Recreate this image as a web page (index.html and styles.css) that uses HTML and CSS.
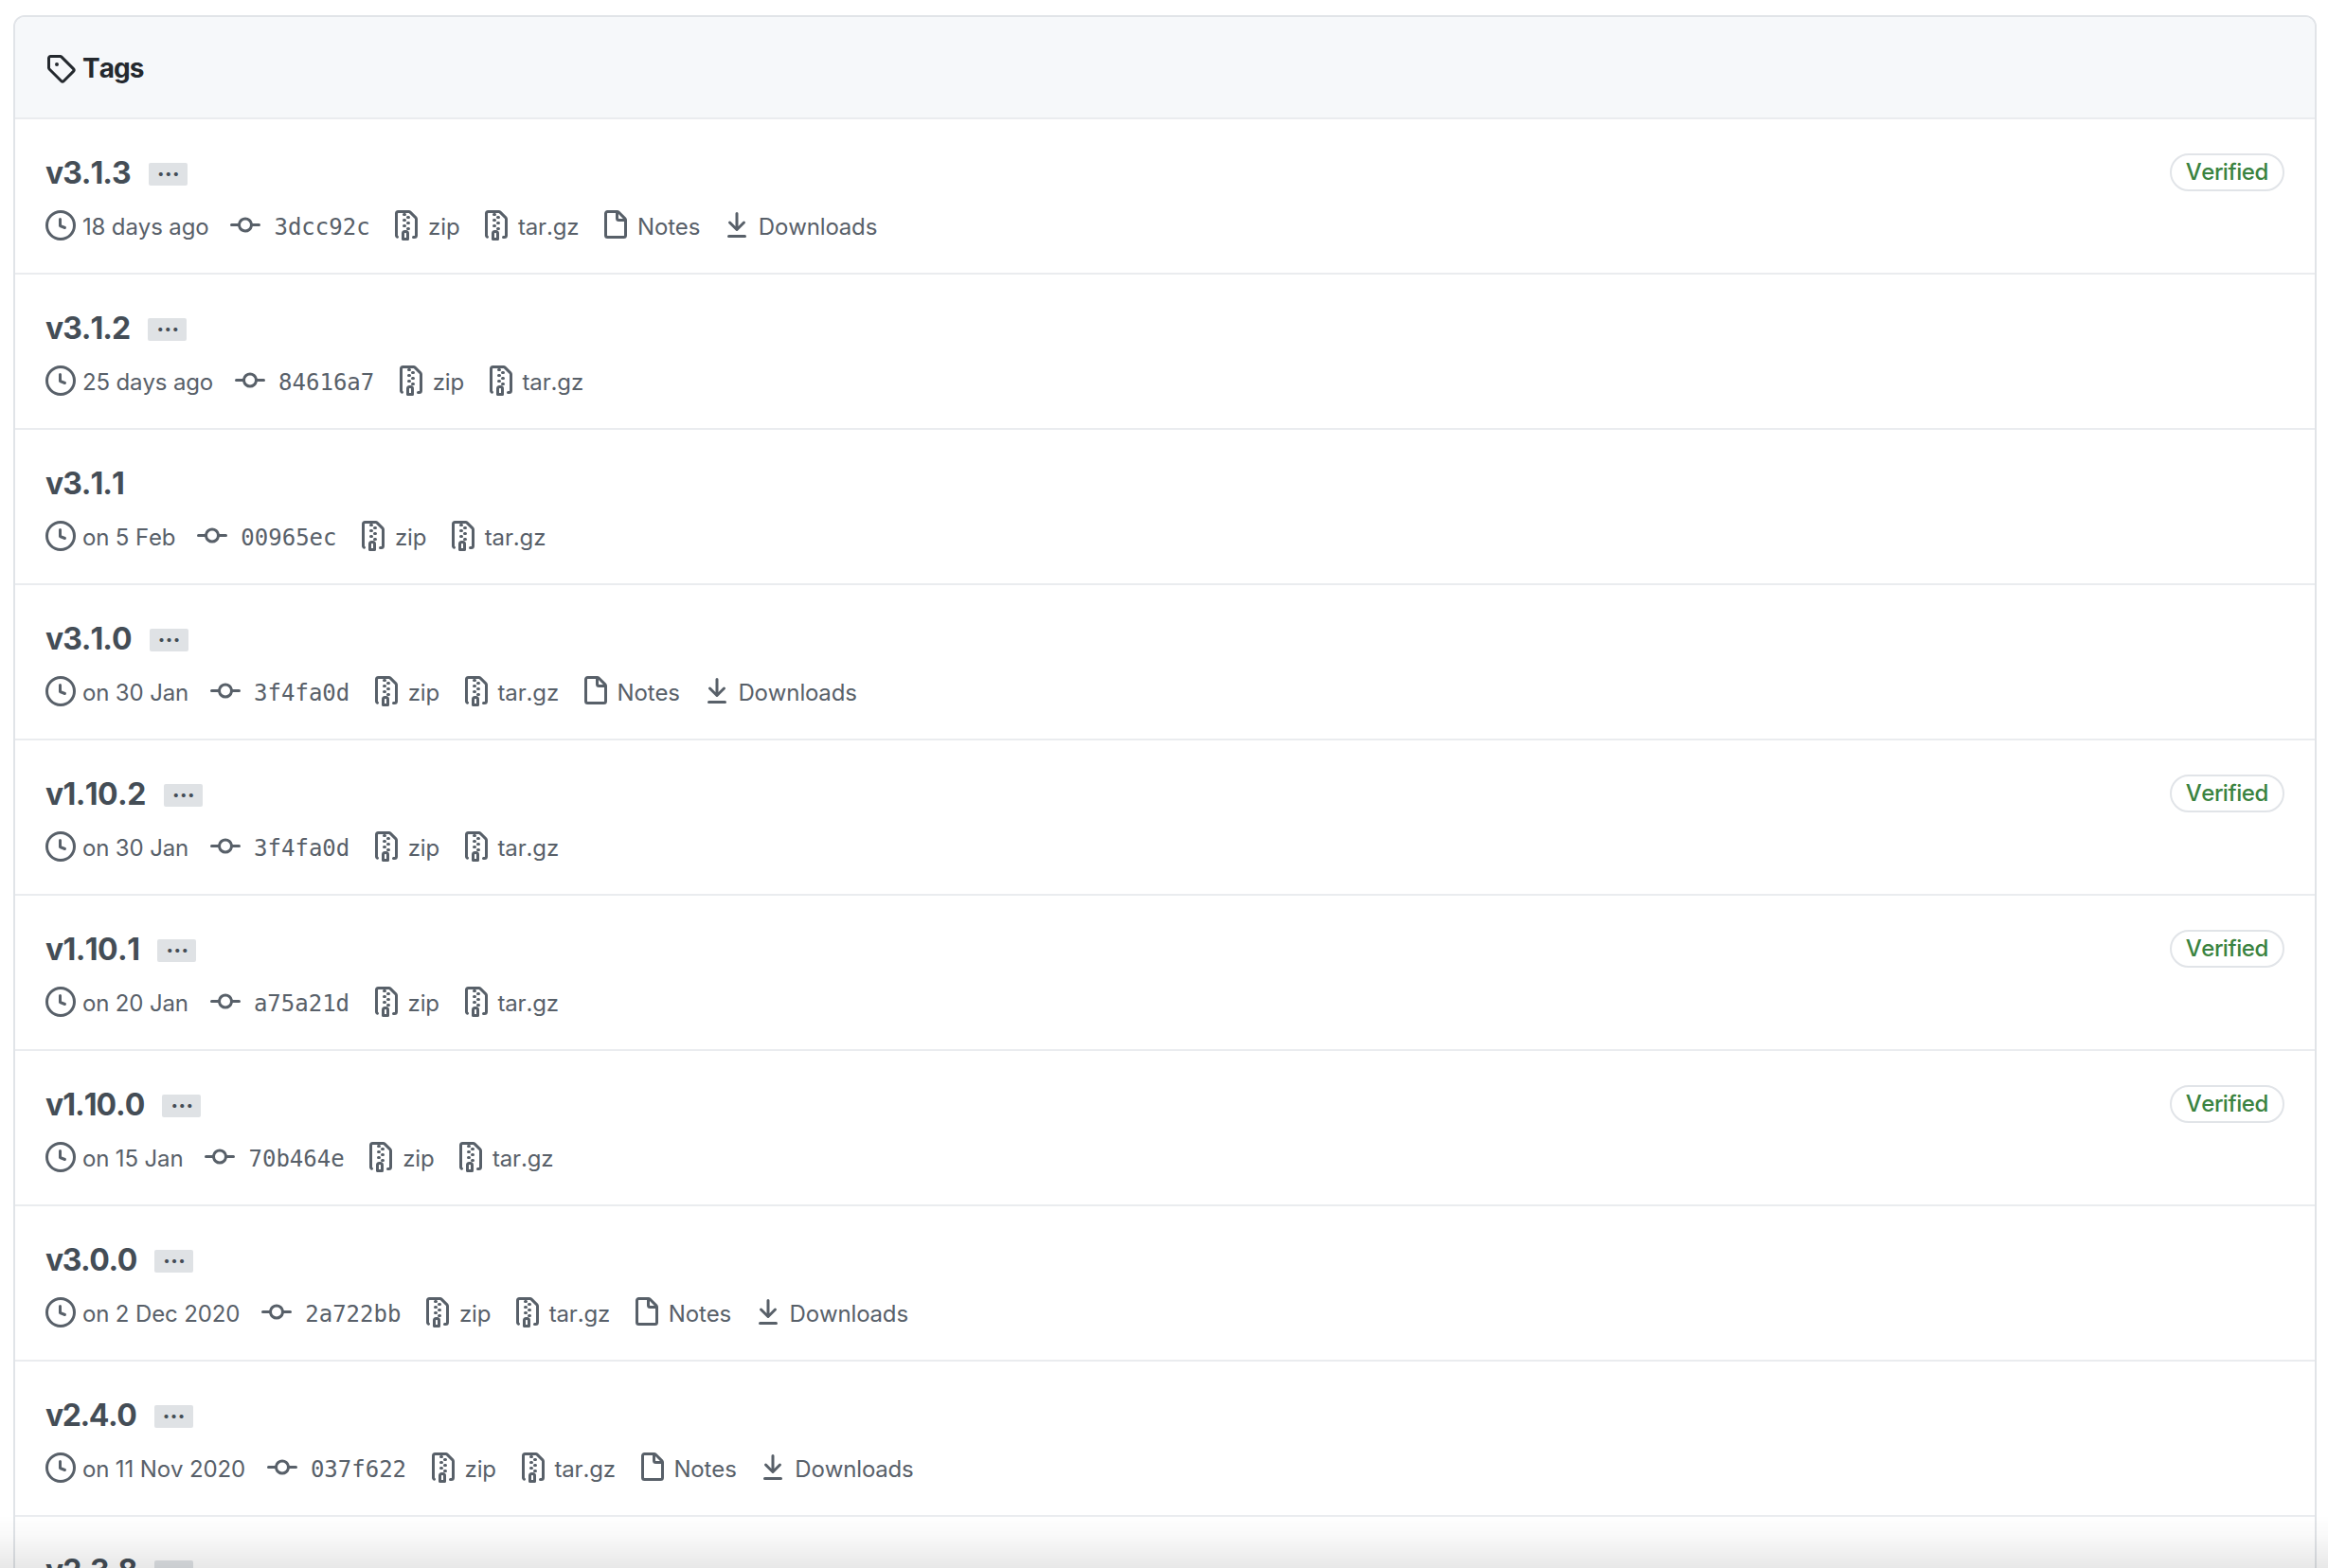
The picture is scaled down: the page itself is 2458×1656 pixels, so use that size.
FILE: index.html
```html
<!DOCTYPE html>
<html lang="en">

<head>
  <meta charset="UTF-8">
  <meta name="viewport" content="width=device-width, initial-scale=1.0">
  <title>Tags</title>
  <link rel="stylesheet" href="styles.css">
</head>

<body>
  <svg class="sprite" aria-hidden="true">
    <symbol id="tag" viewBox="0 0 16 16"><path fill-rule="evenodd" d="M2.5 7.775V2.75a.25.25 0 01.25-.25h5.025a.25.25 0 01.177.073l6.25 6.25a.25.25 0 010 .354l-5.025 5.025a.25.25 0 01-.354 0l-6.25-6.25a.25.25 0 01-.073-.177zm-1.5 0V2.75C1 1.784 1.784 1 2.75 1h5.025c.464 0 .91.184 1.238.513l6.25 6.25a1.75 1.75 0 010 2.474l-5.026 5.026a1.75 1.75 0 01-2.474 0l-6.25-6.25A1.75 1.75 0 011 7.775zM6 5a1 1 0 100 2 1 1 0 000-2z"/></symbol>
    <symbol id="clock" viewBox="0 0 16 16"><path fill-rule="evenodd" d="M1.5 8a6.5 6.5 0 1113 0 6.5 6.5 0 01-13 0zM8 0a8 8 0 100 16A8 8 0 008 0zm.5 4.75a.75.75 0 00-1.5 0v3.5a.75.75 0 00.471.696l2.5 1a.75.75 0 00.557-1.392L8.5 7.742V4.75z"/></symbol>
    <symbol id="commit" viewBox="0 0 16 16"><path fill-rule="evenodd" d="M10.5 7.75a2.5 2.5 0 11-5 0 2.5 2.5 0 015 0zm1.43.75a4.002 4.002 0 01-7.86 0H.75a.75.75 0 110-1.5h3.32a4.001 4.001 0 017.86 0h3.32a.75.75 0 110 1.5h-3.32z"/></symbol>
    <symbol id="file-zip" viewBox="0 0 16 16"><path fill-rule="evenodd" d="M3.5 1.75a.25.25 0 01.25-.25h3a.75.75 0 000 1.5h.5a.75.75 0 000-1.5h2.086a.25.25 0 01.177.073l2.914 2.914a.25.25 0 01.073.177v8.586a.25.25 0 01-.25.25h-.5a.75.75 0 000 1.5h.5A1.75 1.75 0 0014 13.25V4.664c0-.464-.184-.909-.513-1.237L10.573.513A1.75 1.75 0 009.336 0H3.75A1.75 1.75 0 002 1.75v11.5c0 .649.353 1.214.874 1.515a.75.75 0 10.752-1.298.25.25 0 01-.126-.217V1.75zM8.75 3a.75.75 0 000 1.5h.5a.75.75 0 000-1.5h-.5zM6 5.25a.75.75 0 01.75-.75h.5a.75.75 0 010 1.5h-.5A.75.75 0 016 5.25zm2 1.5A.75.75 0 018.75 6h.5a.75.75 0 010 1.5h-.5A.75.75 0 018 6.75zm-1.25.75a.75.75 0 000 1.5h.5a.75.75 0 000-1.5h-.5zM8 9.75A.75.75 0 018.75 9h.5a.75.75 0 010 1.5h-.5A.75.75 0 018 9.75zm-.75.75a1.75 1.75 0 00-1.75 1.75v3c0 .414.336.75.75.75h2.5a.75.75 0 00.75-.75v-3a1.75 1.75 0 00-1.75-1.75h-.5zM7 12.25a.25.25 0 01.25-.25h.5a.25.25 0 01.25.25v2.25H7v-2.25z"/></symbol>
    <symbol id="file" viewBox="0 0 16 16"><path fill-rule="evenodd" d="M3.75 1.5a.25.25 0 00-.25.25v11.5c0 .138.112.25.25.25h8.5a.25.25 0 00.25-.25V6H9.75A1.75 1.75 0 018 4.25V1.5H3.75zm5.75.56v2.19c0 .138.112.25.25.25h2.19L9.5 2.06zM2 1.75C2 .784 2.784 0 3.75 0h5.086c.464 0 .909.184 1.237.513l3.414 3.414c.329.328.513.773.513 1.237v8.086A1.75 1.75 0 0112.25 15h-8.5A1.75 1.75 0 012 13.25V1.75z"/></symbol>
    <symbol id="download" viewBox="0 0 16 16"><path fill-rule="evenodd" d="M7.47 10.78a.75.75 0 001.06 0l3.75-3.75a.75.75 0 00-1.06-1.06L8.75 8.44V1.75a.75.75 0 00-1.5 0v6.69L4.78 5.97a.75.75 0 00-1.06 1.06l3.75 3.75zM3.75 13a.75.75 0 000 1.5h8.5a.75.75 0 000-1.5h-8.5z"/></symbol>
  </svg>

  <div class="box">
    <div class="box-header">
      <svg class="icon"><use href="#tag"/></svg>
      <h3>Tags</h3>
    </div>

    <div class="row">
      <div class="title">
        <h4>v3.1.3</h4>
        <button class="expander">…</button>
        <span class="verified">Verified</span>
      </div>
      <ul class="meta">
        <li><svg class="icon"><use href="#clock"/></svg>18 days ago</li>
        <li class="sha"><svg class="icon"><use href="#commit"/></svg>3dcc92c</li>
        <li><svg class="icon"><use href="#file-zip"/></svg>zip</li>
        <li><svg class="icon"><use href="#file-zip"/></svg>tar.gz</li>
        <li><svg class="icon"><use href="#file"/></svg>Notes</li>
        <li><svg class="icon"><use href="#download"/></svg>Downloads</li>
      </ul>
    </div>

    <div class="row">
      <div class="title">
        <h4>v3.1.2</h4>
        <button class="expander">…</button>
      </div>
      <ul class="meta">
        <li><svg class="icon"><use href="#clock"/></svg>25 days ago</li>
        <li class="sha"><svg class="icon"><use href="#commit"/></svg>84616a7</li>
        <li><svg class="icon"><use href="#file-zip"/></svg>zip</li>
        <li><svg class="icon"><use href="#file-zip"/></svg>tar.gz</li>
      </ul>
    </div>

    <div class="row">
      <div class="title">
        <h4>v3.1.1</h4>
      </div>
      <ul class="meta">
        <li><svg class="icon"><use href="#clock"/></svg>on 5 Feb</li>
        <li class="sha"><svg class="icon"><use href="#commit"/></svg>00965ec</li>
        <li><svg class="icon"><use href="#file-zip"/></svg>zip</li>
        <li><svg class="icon"><use href="#file-zip"/></svg>tar.gz</li>
      </ul>
    </div>

    <div class="row">
      <div class="title">
        <h4>v3.1.0</h4>
        <button class="expander">…</button>
      </div>
      <ul class="meta">
        <li><svg class="icon"><use href="#clock"/></svg>on 30 Jan</li>
        <li class="sha"><svg class="icon"><use href="#commit"/></svg>3f4fa0d</li>
        <li><svg class="icon"><use href="#file-zip"/></svg>zip</li>
        <li><svg class="icon"><use href="#file-zip"/></svg>tar.gz</li>
        <li><svg class="icon"><use href="#file"/></svg>Notes</li>
        <li><svg class="icon"><use href="#download"/></svg>Downloads</li>
      </ul>
    </div>

    <div class="row">
      <div class="title">
        <h4 class="minor">v1.10.2</h4>
        <button class="expander">…</button>
        <span class="verified">Verified</span>
      </div>
      <ul class="meta">
        <li><svg class="icon"><use href="#clock"/></svg>on 30 Jan</li>
        <li class="sha"><svg class="icon"><use href="#commit"/></svg>3f4fa0d</li>
        <li><svg class="icon"><use href="#file-zip"/></svg>zip</li>
        <li><svg class="icon"><use href="#file-zip"/></svg>tar.gz</li>
      </ul>
    </div>

    <div class="row">
      <div class="title">
        <h4 class="minor">v1.10.1</h4>
        <button class="expander">…</button>
        <span class="verified">Verified</span>
      </div>
      <ul class="meta">
        <li><svg class="icon"><use href="#clock"/></svg>on 20 Jan</li>
        <li class="sha"><svg class="icon"><use href="#commit"/></svg>a75a21d</li>
        <li><svg class="icon"><use href="#file-zip"/></svg>zip</li>
        <li><svg class="icon"><use href="#file-zip"/></svg>tar.gz</li>
      </ul>
    </div>

    <div class="row">
      <div class="title">
        <h4>v1.10.0</h4>
        <button class="expander">…</button>
        <span class="verified">Verified</span>
      </div>
      <ul class="meta">
        <li><svg class="icon"><use href="#clock"/></svg>on 15 Jan</li>
        <li class="sha"><svg class="icon"><use href="#commit"/></svg>70b464e</li>
        <li><svg class="icon"><use href="#file-zip"/></svg>zip</li>
        <li><svg class="icon"><use href="#file-zip"/></svg>tar.gz</li>
      </ul>
    </div>

    <div class="row">
      <div class="title">
        <h4 class="major">v3.0.0</h4>
        <button class="expander">…</button>
      </div>
      <ul class="meta">
        <li><svg class="icon"><use href="#clock"/></svg>on 2 Dec 2020</li>
        <li class="sha"><svg class="icon"><use href="#commit"/></svg>2a722bb</li>
        <li><svg class="icon"><use href="#file-zip"/></svg>zip</li>
        <li><svg class="icon"><use href="#file-zip"/></svg>tar.gz</li>
        <li><svg class="icon"><use href="#file"/></svg>Notes</li>
        <li><svg class="icon"><use href="#download"/></svg>Downloads</li>
      </ul>
    </div>

    <div class="row">
      <div class="title">
        <h4 class="major">v2.4.0</h4>
        <button class="expander">…</button>
      </div>
      <ul class="meta">
        <li><svg class="icon"><use href="#clock"/></svg>on 11 Nov 2020</li>
        <li class="sha"><svg class="icon"><use href="#commit"/></svg>037f622</li>
        <li><svg class="icon"><use href="#file-zip"/></svg>zip</li>
        <li><svg class="icon"><use href="#file-zip"/></svg>tar.gz</li>
        <li><svg class="icon"><use href="#file"/></svg>Notes</li>
        <li><svg class="icon"><use href="#download"/></svg>Downloads</li>
      </ul>
    </div>

    <div class="row">
      <div class="title">
        <h4>v2.3.8</h4>
        <button class="expander">…</button>
      </div>
    </div>
  </div>

  <div class="fade"></div>
</body>

</html>
```

FILE: styles.css
```css
* {
  box-sizing: border-box;
}

body {
  font-family: Inter, "Liberation Sans", sans-serif;
  font-size: 28px;
  font-kerning: none;
  line-height: 1.5;
  color: #24292e;
  background-color: #fff;
  height: 100vh;
  margin: 0;
  padding: 16px 12px 0 14px;
  overflow: hidden;
}

.sprite {
  display: none;
}

.icon {
  width: 32px;
  height: 32px;
  fill: currentColor;
  flex-shrink: 0;
}

.box {
  border: 2px solid #e1e4e8;
  border-radius: 12px;
  overflow: hidden;
}

.box-header {
  display: flex;
  align-items: center;
  gap: 7px;
  height: 106px;
  padding: 2px 32px 0;
  background-color: #f6f8fa;
}

h3,
h4 {
  margin: 0;
  font-weight: 650;
}

h3 {
  font-size: 28px;
  letter-spacing: -1px;
}

.row {
  height: 164px;
  padding: 32px 32px 0;
  border-top: 2px solid #eaecef;
}

.title {
  display: flex;
  height: 48px;
}

h4 {
  font-size: 32px;
  line-height: 50px;
  letter-spacing: -1px;
  color: #444d56;
}

h4.minor {
  letter-spacing: -0.6px;
}

h4.major {
  letter-spacing: -1.4px;
}

.expander {
  width: 41px;
  height: 24px;
  margin: 14px 0 0 19px;
  padding: 0;
  border: none;
  border-radius: 2px;
  background-color: #dfe2e5;
  color: #444d56;
  font-family: inherit;
  font-size: 24px;
  font-weight: 700;
  letter-spacing: -1px;
  line-height: 12px;
  padding-bottom: 12px;
}

.verified {
  height: 40px;
  margin: 4px 0 0 auto;
  padding: 0 15px;
  border: 2px solid #e1e4e8;
  border-radius: 20px;
  color: #3a8340;
  font-size: 24px;
  font-weight: 550;
  letter-spacing: -0.4px;
  line-height: 36px;
}

.meta {
  display: flex;
  gap: 22.6px;
  margin: 16px 0 0;
  padding: 0;
  list-style: none;
  color: #586069;
  font-size: 24px;
  letter-spacing: -0.13px;
  line-height: 36px;
}

.meta li {
  display: flex;
  gap: 6.9px;
}

.meta .sha {
  gap: 14.4px;
  font-family: "DejaVu Sans Mono", "Liberation Mono", monospace;
  letter-spacing: 0;
}

/* shade along the bottom edge of the window */
.fade {
  position: fixed;
  left: 0;
  right: 0;
  bottom: 0;
  height: 56px;
  background: linear-gradient(rgba(0, 0, 0, 0), rgba(0, 0, 0, 0.025) 40%, rgba(0, 0, 0, 0.09));
}
```
